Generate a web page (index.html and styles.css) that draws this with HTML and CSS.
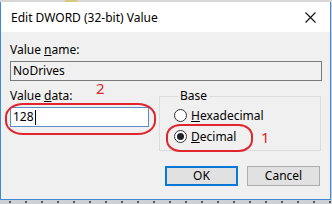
FILE: index.html
```html
<!DOCTYPE html>
<html lang="en">
<head>
  <meta charset="UTF-8">
  <title>Edit DWORD (32-bit) Value</title>
  <link rel="stylesheet" href="styles.css">
</head>
<body>
  <div class="strip"><span class="strip-mark"></span></div>

  <div class="window">
    <div class="titlebar">
      <span class="title">Edit DWORD (32-bit) Value</span>
      <svg class="close" width="11" height="11" viewBox="0 0 11 11">
        <path d="M0.5 0.5 L10.5 10.5 M10.5 0.5 L0.5 10.5" stroke="#111" stroke-width="1.1" fill="none"/>
      </svg>
    </div>

    <div class="content">
      <div class="label">Value <u>n</u>ame:</div>
      <div class="field readonly">NoDrives</div>

      <div class="row">
        <div class="data-col">
          <div class="label">Value <u>d</u>ata:</div>
          <div class="field input">128<span class="caret"></span></div>
        </div>

        <fieldset class="group">
          <legend>Base</legend>
          <div class="radio"><span class="dot"></span><span><u>H</u>exadecimal</span></div>
          <div class="radio"><span class="dot checked"></span><span><u>D</u>ecimal</span></div>
        </fieldset>
      </div>

      <div class="buttons">
        <div class="btn default">OK</div>
        <div class="btn">Cancel</div>
      </div>
    </div>

    <!-- red markup drawn on top of the screenshot -->
    <div class="mark ring-data"></div>
    <div class="mark ring-dec"></div>
    <div class="mark num num-2">2</div>
    <div class="mark num num-1">1</div>
  </div>

  <div class="taskbar"></div>
</body>
</html>
```

FILE: styles.css
```css
body {
  margin: 0;
  width: 332px;
  height: 204px;
  overflow: hidden;
  background-color: #cdd1d6;
  font-family: 'Noto Sans', 'Liberation Sans', sans-serif;
  font-size: 12px;
  color: #000;
}

.strip {
  height: 2px;
  background-color: #d6d6d6;
  position: relative;
}

.strip-mark {
  display: block;
  margin-left: 65px;
  width: 12px;
  height: 2px;
  background-color: #d9c97a;
}

.window {
  position: relative;
  width: 329px;
  height: 197px;
  border: 1px solid #3c8ad8;
  border-top: none;
  background-color: #f0f0f0;
}

.titlebar {
  height: 30px;
  background-color: #ffffff;
  display: flex;
  align-items: center;
  padding: 0 10px;
}

.title {
  flex: 1;
  font-size: 12px;
}

.close {
  margin-right: 4px;
}

.content {
  padding: 11px 9px 0 9px;
}

.label {
  line-height: 14px;
}

.label u {
  text-decoration-thickness: 1px;
}

.field {
  box-sizing: border-box;
  height: 20px;
  line-height: 18px;
  padding: 0 2px;
  margin-top: 4px;
  border: 1px solid #7a7a7a;
}

.readonly {
  width: 312px;
  background-color: #f0f0f0;
}

.row {
  display: flex;
  gap: 10px;
  margin-top: 8px;
}

.data-col {
  width: 139px;
}

.input {
  background-color: #ffffff;
  border-color: #5a8ec9;
  display: flex;
  align-items: center;
}

.caret {
  display: inline-block;
  width: 1px;
  height: 15px;
  margin-left: 1px;
  background-color: #000;
}

.group {
  box-sizing: border-box;
  width: 162px;
  height: 62px;
  margin: 0;
  padding: 2px 0 0 14px;
  border: 1px solid #dcdcdc;
}

.group legend {
  padding: 0 2px;
  margin-left: 4px;
  line-height: 14px;
}

.radio {
  display: flex;
  align-items: center;
  height: 21px;
  gap: 4px;
}

.dot {
  box-sizing: border-box;
  width: 13px;
  height: 13px;
  border: 1px solid #333;
  border-radius: 50%;
  background-color: #fff;
  display: flex;
  align-items: center;
  justify-content: center;
}

.dot.checked::after {
  content: "";
  width: 7px;
  height: 7px;
  border-radius: 50%;
  background-color: #222;
}

.buttons {
  display: flex;
  justify-content: flex-end;
  gap: 9px;
  margin-top: 15px;
  padding-right: 1px;
}

.btn {
  box-sizing: border-box;
  width: 73px;
  height: 20px;
  line-height: 18px;
  text-align: center;
  background-color: #e1e1e1;
  border: 1px solid #adadad;
}

.btn.default {
  border: 2px solid #0a78d7;
  line-height: 16px;
}

.mark {
  position: absolute;
}

.ring-data {
  left: 4px;
  top: 101px;
  width: 147px;
  height: 28px;
  border: 2px solid #e0262c;
  border-radius: 18px / 14px;
}

.ring-dec {
  left: 165px;
  top: 122px;
  width: 83px;
  height: 24px;
  border: 2px solid #e0262c;
  border-radius: 14px / 12px;
}

.num {
  color: #e0262c;
  font-size: 15px;
  line-height: 16px;
}

.num-2 {
  left: 95px;
  top: 78px;
}

.num-1 {
  left: 260px;
  top: 127px;
}

.taskbar {
  height: 4px;
  background-image: radial-gradient(circle, #555 0.7px, transparent 1px);
  background-size: 16px 4px;
  background-position: 2px 0;
}
```
